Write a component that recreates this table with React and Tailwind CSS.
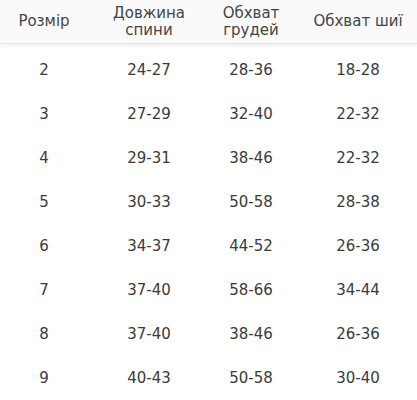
import React from 'react';

const rows = [
  ['2', '24-27', '28-36', '18-28'],
  ['3', '27-29', '32-40', '22-32'],
  ['4', '29-31', '38-46', '22-32'],
  ['5', '30-33', '50-58', '28-38'],
  ['6', '34-37', '44-52', '26-36'],
  ['7', '37-40', '58-66', '34-44'],
  ['8', '37-40', '38-46', '26-36'],
  ['9', '40-43', '50-58', '30-40'],
];

const cols = 'grid grid-cols-[88px_122px_82px_132px]';

export default function App() {
  return (
    <div className="w-[417px] h-[400px] overflow-hidden bg-white font-['DejaVu_Sans',sans-serif] text-[#3a3a3a] text-[15px]">
      <div className={`${cols} h-[44px] bg-[#fafafa] border-b border-[#e4e4ec] shadow-[0_2px_4px_rgba(0,0,0,0.06)] items-center text-center leading-[17px] text-[#444]`}>
        <div>Розмір</div>
        <div>Довжина<br />спини</div>
        <div>Обхват<br />грудей</div>
        <div>Обхват шиї</div>
      </div>
      <div className="pt-[4px]">
        {rows.map((r) => (
          <div key={r[0]} className={`${cols} h-[44px] items-center text-center`}>
            {r.map((c, i) => (
              <div key={i}>{c}</div>
            ))}
          </div>
        ))}
      </div>
    </div>
  );
}
